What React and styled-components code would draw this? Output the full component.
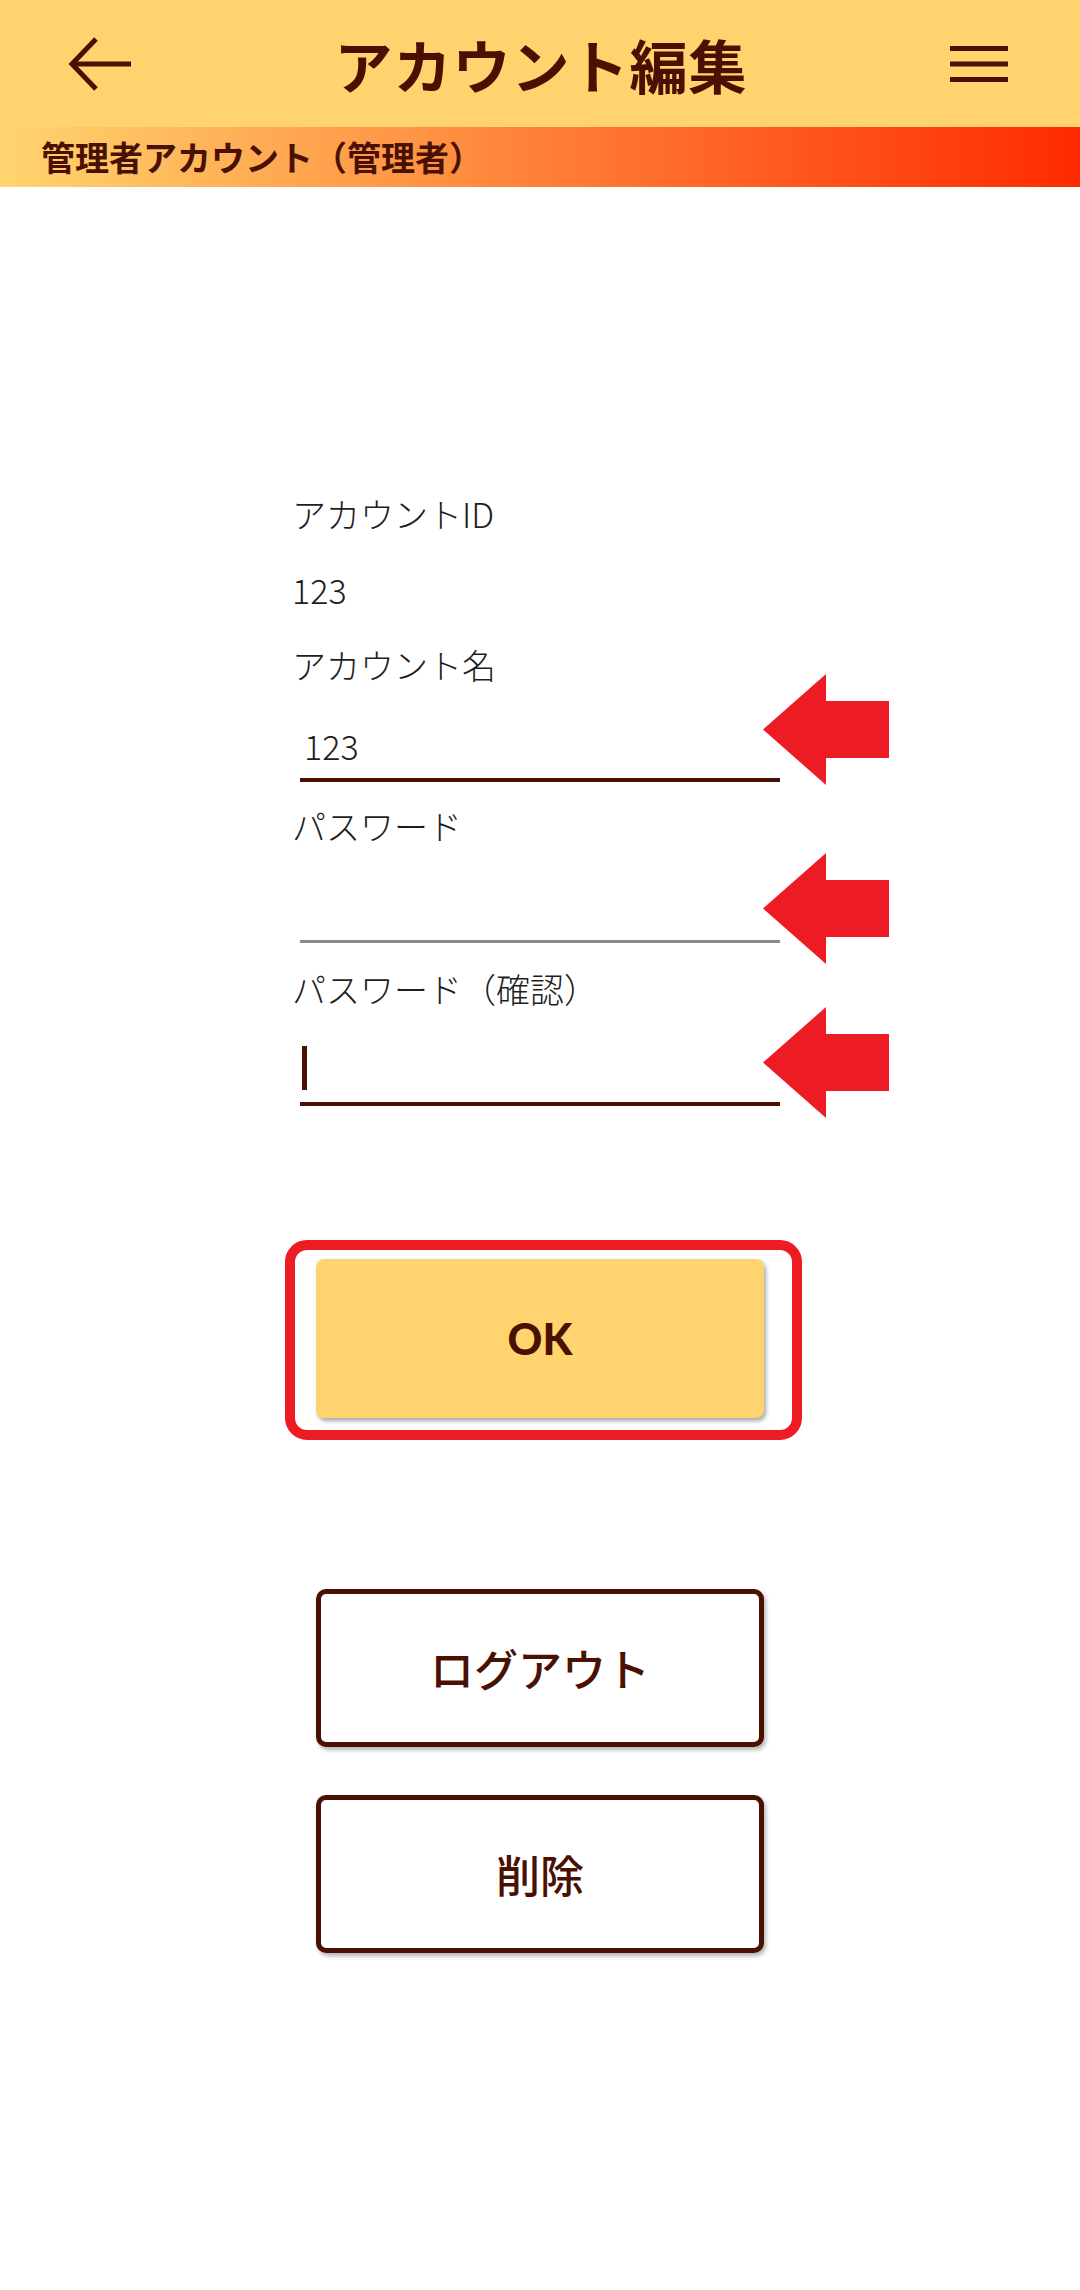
import React from "react";
import styled, { createGlobalStyle } from "styled-components";

const GlobalStyle = createGlobalStyle`
  body {
    margin: 0;
    background: #ffffff;
    font-family: "Noto Sans CJK JP", "Noto Sans", sans-serif;
  }
`;

const BROWN = "#4a1103";
const YELLOW = "#ffd46f";
const RED = "#ed1c24";

const Page = styled.div`
  width: 1080px;
  min-height: 2290px;
  background: #fff;
`;

const Header = styled.header`
  height: 127px;
  background: ${YELLOW};
  display: flex;
  align-items: center;
  justify-content: space-between;
  padding: 0 72px 0 68px;
  box-sizing: border-box;
`;

const IconButton = styled.button`
  background: none;
  border: none;
  padding: 0;
  display: flex;
  align-items: center;
  cursor: pointer;
`;

const Title = styled.h1`
  margin: 0;
  font-size: 58px;
  font-weight: 700;
  color: ${BROWN};
  letter-spacing: 1px;
`;

const SubHeader = styled.div`
  height: 60px;
  line-height: 60px;
  padding-left: 41px;
  background: linear-gradient(90deg, #ffd56f 0%, #ff8038 50%, #ff2a00 100%);
  font-size: 34px;
  font-weight: 700;
  color: ${BROWN};
`;

const Form = styled.form`
  width: 496px;
  margin: 0 auto;
  padding-top: 302px;
`;

const Label = styled.div`
  font-size: 34px;
  font-weight: 300;
  line-height: 50px;
  color: #1e1e1e;
  margin-top: ${(p) => p.gap || 0}px;
`;

const InputRow = styled.div`
  position: relative;
  margin-left: 8px;
  width: 480px;
`;

const Input = styled.input`
  display: block;
  width: 100%;
  height: 92px;
  box-sizing: border-box;
  padding: 22px 4px 0;
  border: none;
  border-bottom: ${(p) => (p.active ? `4px solid ${BROWN}` : "3px solid #888")};
  font-family: "Noto Sans CJK JP", "Noto Sans", sans-serif;
  font-size: 34px;
  font-weight: 300;
  color: #1e1e1e;
  background: transparent;
  outline: none;
`;

const Caret = styled.span`
  position: absolute;
  left: 2px;
  top: 32px;
  width: 5px;
  height: 44px;
  background: ${BROWN};
`;

const Arrow = styled.svg`
  position: absolute;
  left: 463px;
  top: ${(p) => p.offset}px;
  width: 126px;
  height: 111px;
`;

const Buttons = styled.div`
  display: flex;
  flex-direction: column;
  align-items: center;
  margin-top: 134px;
`;

const Highlight = styled.div`
  border: 10px solid ${RED};
  border-radius: 22px;
  padding: 9px 28px 12px 21px;
  margin-left: 7px;
`;

const OkButton = styled.button`
  display: block;
  width: 448px;
  height: 159px;
  border: none;
  border-radius: 8px;
  background: ${YELLOW};
  box-shadow: 2px 3px 4px rgba(0, 0, 0, 0.35);
  font-family: "Lato", "Noto Sans", sans-serif;
  font-weight: 900;
  font-size: 43px;
  color: ${BROWN};
  cursor: pointer;
`;

const OutlineButton = styled.button`
  width: 448px;
  height: 158px;
  margin-top: ${(p) => p.gap}px;
  border: 5px solid ${BROWN};
  border-radius: 10px;
  background: #fff;
  box-shadow: 2px 3px 4px rgba(0, 0, 0, 0.3);
  font-family: "Noto Sans CJK JP", "Noto Sans", sans-serif;
  font-weight: 500;
  font-size: 44px;
  color: ${BROWN};
  cursor: pointer;
`;

const RedArrow = ({ offset }) => (
  <Arrow offset={offset} viewBox="0 0 126 111">
    <path d="M0 55.5 L63 0 L63 27 L126 27 L126 84 L63 84 L63 111 Z" fill={RED} />
  </Arrow>
);

const App = () => {
  return (
    <Page>
      <GlobalStyle />
      <Header>
        <IconButton aria-label="back">
          <svg width="64" height="56" viewBox="0 0 64 56" fill="none" stroke={BROWN} strokeWidth="5">
            <path d="M63 28 H5" />
            <path d="M28 3 L4 28 L28 53" strokeLinejoin="miter" />
          </svg>
        </IconButton>
        <Title>アカウント編集</Title>
        <IconButton aria-label="menu">
          <svg width="58" height="40" viewBox="0 0 58 40" fill={BROWN}>
            <rect x="0" y="2" width="58" height="5" />
            <rect x="0" y="17.5" width="58" height="5" />
            <rect x="0" y="33" width="58" height="5" />
          </svg>
        </IconButton>
      </Header>
      <SubHeader>管理者アカウント（管理者）</SubHeader>

      <Form>
        <Label>アカウントID</Label>
        <Label gap={26}>123</Label>
        <Label gap={25}>アカウント名</Label>
        <InputRow>
          <Input active defaultValue="123" />
          <RedArrow offset={-16} />
        </InputRow>
        <Label gap={19}>パスワード</Label>
        <InputRow>
          <Input type="password" />
          <RedArrow offset={2} />
        </InputRow>
        <Label gap={21}>パスワード（確認）</Label>
        <InputRow>
          <Input active type="password" />
          <Caret />
          <RedArrow offset={-7} />
        </InputRow>
      </Form>

      <Buttons>
        <Highlight>
          <OkButton>OK</OkButton>
        </Highlight>
        <OutlineButton gap={149}>ログアウト</OutlineButton>
        <OutlineButton gap={48}>削除</OutlineButton>
      </Buttons>
    </Page>
  );
};

export default App;
